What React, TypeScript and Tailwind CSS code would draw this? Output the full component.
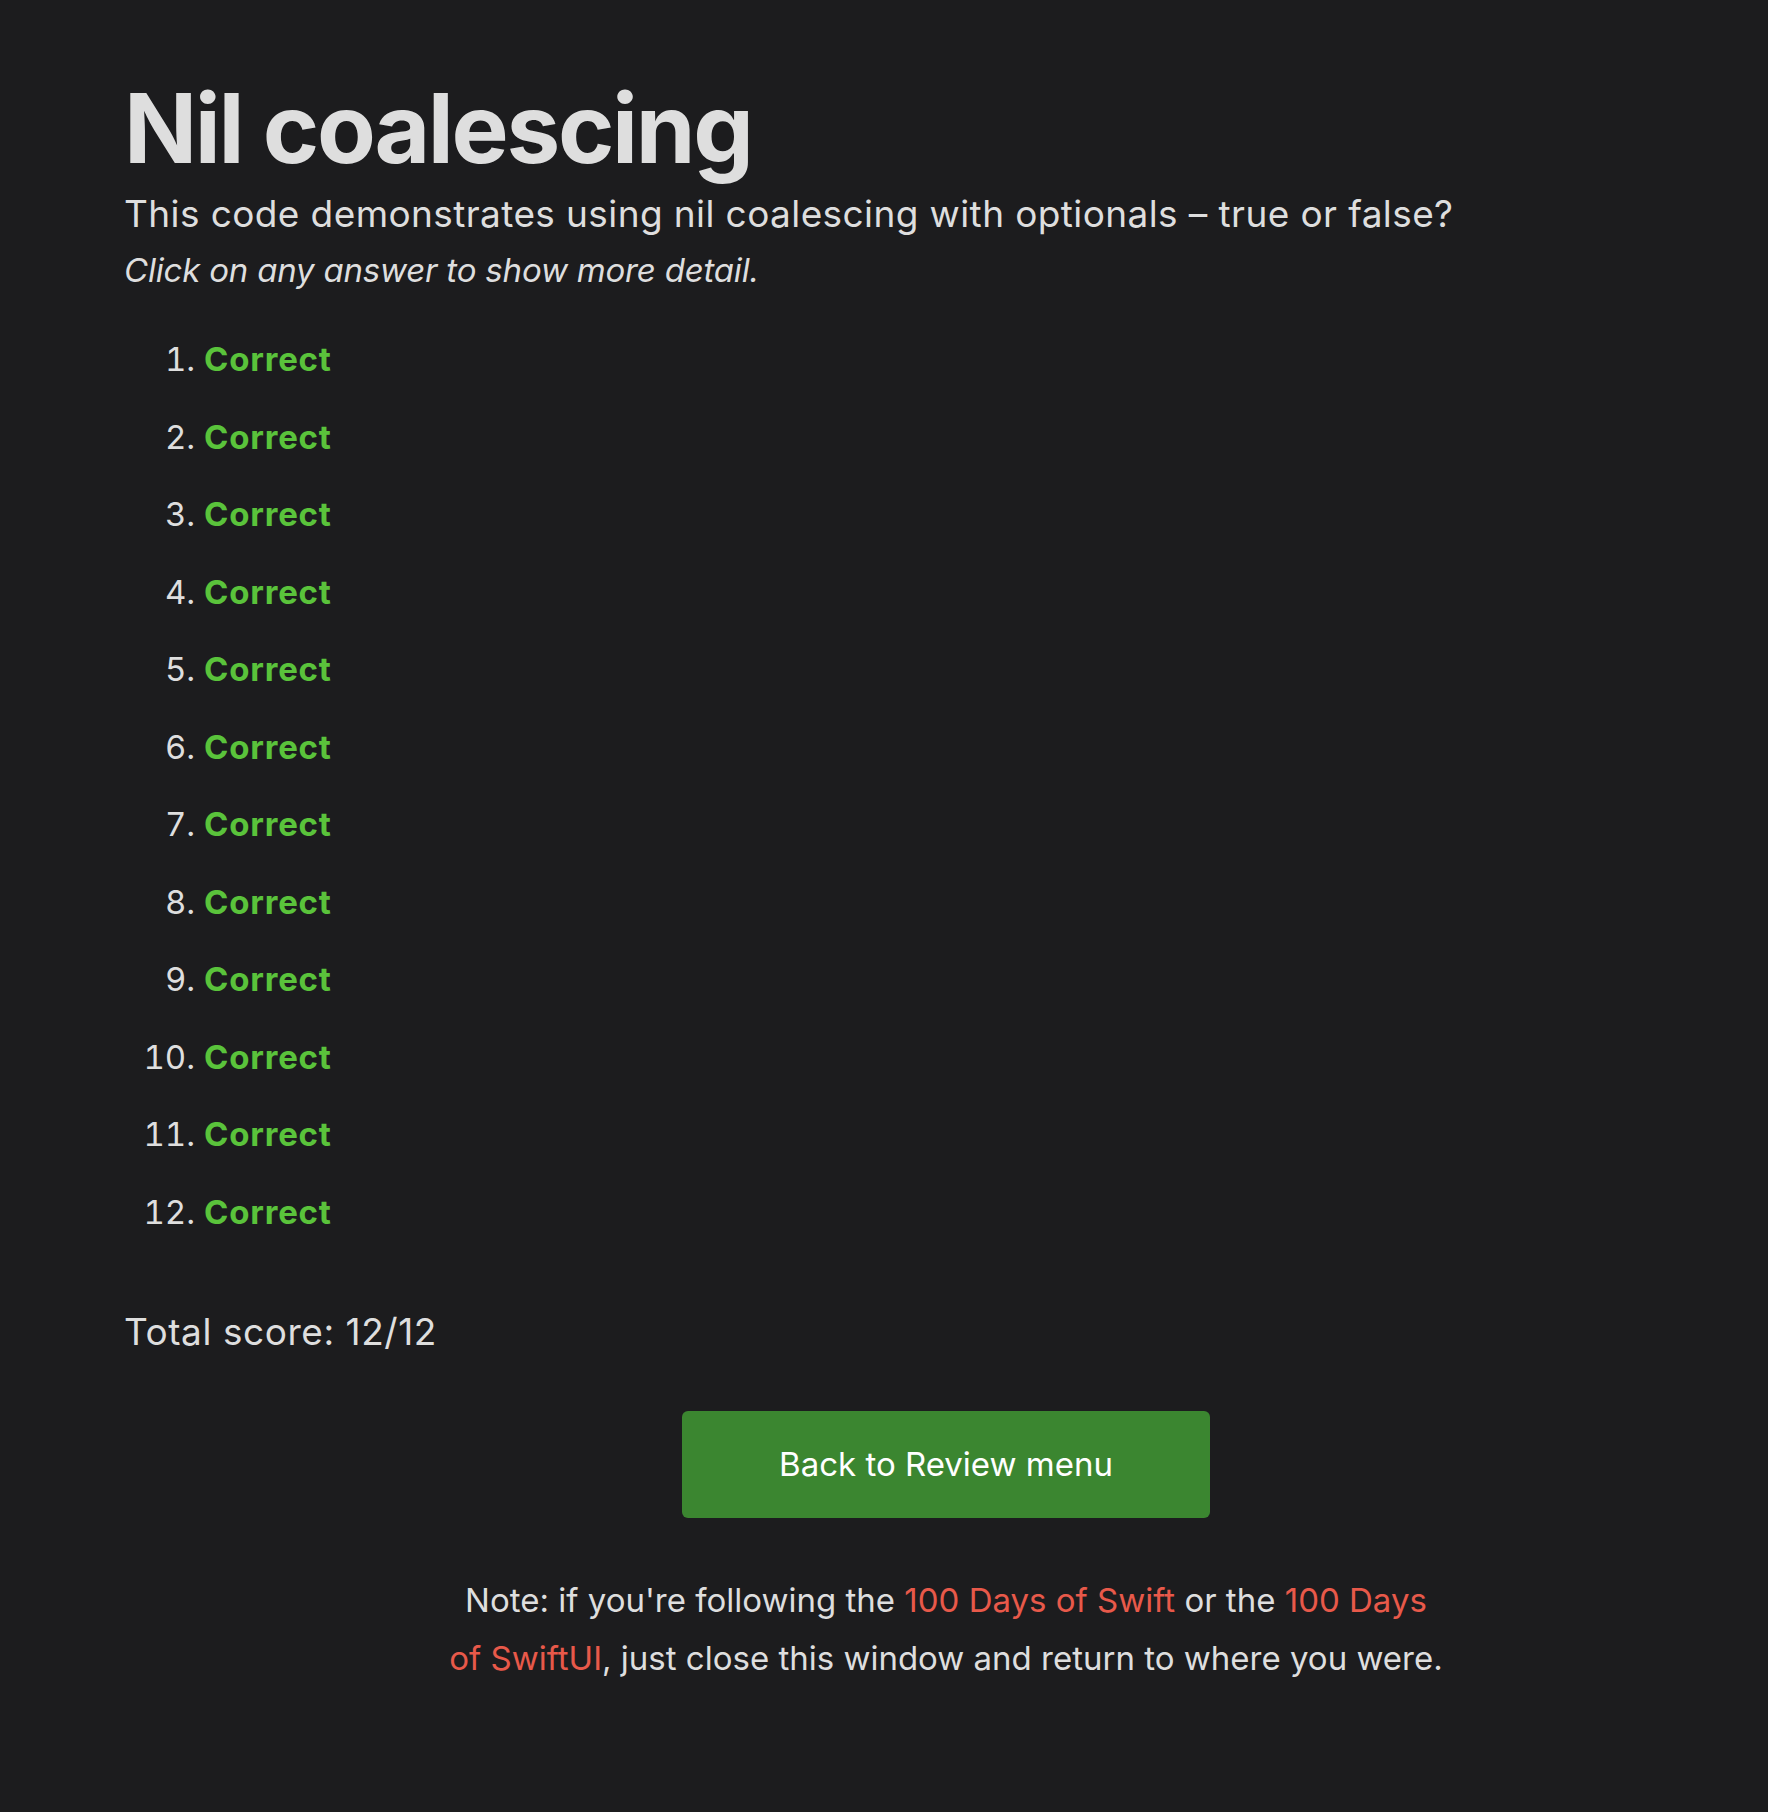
const answers = Array.from({ length: 12 }, (_, i) => i + 1);

export default function App() {
  return (
    <div className="min-h-[1812px] bg-[#1c1c1e] pl-[124px] pt-[80px] font-['Inter','Noto_Sans',sans-serif] text-[#dedede]">
      <h1 className="text-[96px] font-bold leading-[96px] tracking-[-2.3px]">Nil coalescing</h1>
      <p className="mt-[16px] text-[37px] leading-[44px] tracking-[0.4px]">
        This code demonstrates using nil coalescing with optionals – true or false?
      </p>
      <p className="mt-[14px] text-[33px] italic leading-[40px] tracking-[-0.2px]">
        Click on any answer to show more detail.
      </p>

      <ol className="mt-[31px] list-decimal pl-[80px] text-[33px] leading-[77.5px]">
        {answers.map((n) => (
          <li key={n}>
            <span className="cursor-pointer font-bold tracking-[0.8px] text-[#5ac33b]">Correct</span>
          </li>
        ))}
      </ol>

      <p className="mt-[59px] text-[37px] leading-[44px] tracking-[0.55px]">Total score: 12/12</p>

      <div className="mt-[57px] flex justify-center">
        <button className="h-[107px] w-[528px] rounded-[6px] bg-[#3b8630] text-[33px] text-white">
          Back to Review menu
        </button>
      </div>

      <div className="mt-[53px] flex justify-center">
        <p className="max-w-[1000px] text-center text-[33px] leading-[58px]">
          Note: if you're following the <a className="text-[#e8594a]">100 Days of Swift</a> or the{' '}
          <a className="text-[#e8594a]">100 Days of SwiftUI</a>, just close this window and return to where you were.
        </p>
      </div>
    </div>
  );
}
